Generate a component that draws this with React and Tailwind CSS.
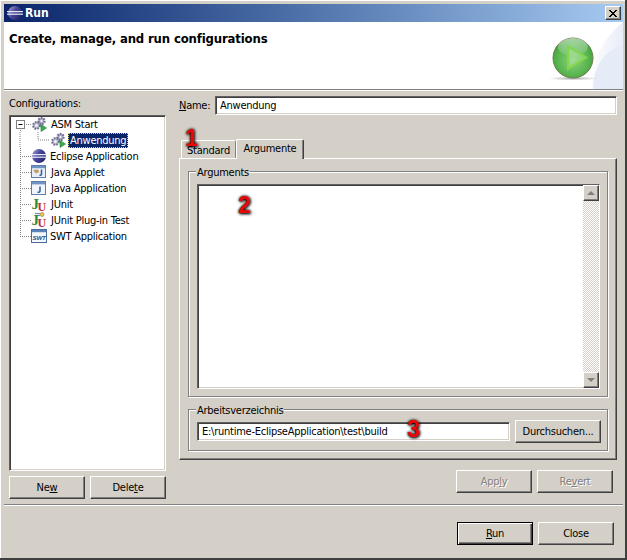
import React from "react";

const bevelUp = "border border-t-white border-l-white border-r-[#404040] border-b-[#404040] shadow-[inset_-1px_-1px_0_#808080]";
const sunken = "border border-t-[#606060] border-l-[#606060] border-r-white border-b-white shadow-[inset_1px_1px_0_#404040,inset_-1px_-1px_0_#d4d0c8]";

function Gears() {
  return (
    <svg width="16" height="16" viewBox="0 0 16 16" className="shrink-0">
      <circle cx="10.5" cy="5" r="3.2" fill="#a9a9c2" stroke="#6d6d8e" strokeWidth="2" strokeDasharray="1.6 1.2" />
      <circle cx="10.5" cy="5" r="1.1" fill="#fff" />
      <circle cx="5.5" cy="9.5" r="3.4" fill="#b9b9cc" stroke="#6d6d8e" strokeWidth="2" strokeDasharray="1.6 1.2" />
      <circle cx="5.5" cy="9.5" r="1.2" fill="#fff" />
      <path d="M10 8.5 L15.5 12 L10 15.5 Z" fill="#35b04a" stroke="#1e7d33" strokeWidth="0.6" />
    </svg>
  );
}

function EclipseIcon({ id = "ec" }) {
  return (
    <svg width="16" height="16" viewBox="0 0 16 16" className="shrink-0">
      <defs>
        <linearGradient id={id} x1="0" x2="1" y1="0" y2="0.6">
          <stop offset="0" stopColor="#b8a8dc" />
          <stop offset="0.5" stopColor="#4a4a9c" />
          <stop offset="1" stopColor="#25256e" />
        </linearGradient>
      </defs>
      <circle cx="8" cy="8" r="7" fill={`url(#${id})`} />
      <rect x="0" y="6" width="16" height="1.2" fill="#e8e8f6" />
      <rect x="0" y="8.6" width="16" height="1.2" fill="#e8e8f6" />
    </svg>
  );
}

function AppletIcon() {
  return (
    <svg width="16" height="16" viewBox="0 0 16 16" className="shrink-0">
      <rect x="0.5" y="1.5" width="14" height="12" fill="#e8eef8" stroke="#5f7fa8" />
      <rect x="1" y="2" width="13" height="2.2" fill="#6f94c4" />
      <path d="M2 6 L7 5.5 L8 8 L5 9.5 Z" fill="#c89a5a" />
      <path d="M10.5 5.5 V10 Q10.5 11.6 8.5 11.2" fill="none" stroke="#2f5da0" strokeWidth="1.5" />
    </svg>
  );
}

function JavaAppIcon() {
  return (
    <svg width="16" height="16" viewBox="0 0 16 16" className="shrink-0">
      <rect x="0.5" y="1.5" width="14" height="13" fill="#f2f6fc" stroke="#5f7fa8" />
      <rect x="1" y="2" width="13" height="2.4" fill="#6f94c4" />
      <path d="M9 6.5 V11 Q9 12.6 6.5 12.2" fill="none" stroke="#2f5da0" strokeWidth="1.5" />
    </svg>
  );
}

function JUnitIcon({ plug }) {
  return (
    <svg width="16" height="16" viewBox="0 0 16 16" className="shrink-0 overflow-visible">
      {plug && (
        <g>
          <path d="M4 1.5 H9" stroke="#7a8fc0" strokeWidth="1.2" />
          <path d="M4 3.5 H9" stroke="#7a8fc0" strokeWidth="1.2" />
          <circle cx="11" cy="2.5" r="2" fill="#e8c45a" stroke="#8a7a30" strokeWidth="0.6" />
        </g>
      )}
      <text x="0.5" y="13" fontFamily="'Liberation Serif', serif" fontWeight="700" fontSize="15" fill="#2e8b3a">J</text>
      <text x="6.5" y="14.5" fontFamily="'Liberation Serif', serif" fontWeight="700" fontSize="12" fill="#c03030">U</text>
    </svg>
  );
}

function SwtIcon() {
  return (
    <svg width="16" height="16" viewBox="0 0 16 16" className="shrink-0">
      <rect x="0.5" y="1.5" width="15" height="13" fill="#f4f7fc" stroke="#4d6c9c" />
      <rect x="1" y="2" width="14" height="2.2" fill="#5c84bc" />
      <text x="8" y="12" textAnchor="middle" fontFamily="'Liberation Sans', sans-serif" fontWeight="700" fontStyle="italic" fontSize="6.2" fill="#2f4f80">SWT</text>
    </svg>
  );
}

function Connector({ first, last, nested }) {
  if (nested) {
    return (
      <svg width="39" height="16" className="shrink-0">
        <path d="M9 0 V16" stroke="#808080" strokeDasharray="1 1" />
        <path d="M27 0 V8 H39" fill="none" stroke="#808080" strokeDasharray="1 1" />
      </svg>
    );
  }
  return (
    <svg width="20" height="16" className="shrink-0">
      <path d={first ? "M9.5 12 V16" : last ? "M9.5 0 V8" : "M9.5 0 V16"} stroke="#808080" strokeDasharray="1 1" />
      <path d="M13 8.5 H20" stroke="#808080" strokeDasharray="1 1" />
      {!first && <path d="M9 8.5 H13" stroke="#808080" strokeDasharray="1 1" />}
      {first && (
        <g>
          <rect x="5.5" y="4.5" width="8" height="8" fill="#fff" stroke="#808080" />
          <path d="M7.5 8.5 H11.5" stroke="#000" />
        </g>
      )}
    </svg>
  );
}

function TreeRow({ icon, label, first, last, nested, selected, gap = "ml-[3px]" }) {
  return (
    <div className="flex h-4 items-center">
      <Connector first={first} last={last} nested={nested} />
      {icon}
      {selected ? (
        <span className="ml-[2px] px-px h-[15px] leading-[13px] border border-dotted border-[#e8d060] bg-[#0a246a] text-white">{label}</span>
      ) : (
        <span className={gap}>{label}</span>
      )}
    </div>
  );
}

function Btn({ children, disabled, def, className = "" }) {
  return (
    <div
      className={`h-[23px] flex items-center justify-center ${className} ${
        def
          ? "border border-black shadow-[inset_1px_1px_0_#fff,inset_-1px_-1px_0_#404040,inset_-2px_-2px_0_#808080]"
          : bevelUp
      } ${disabled ? "text-[#808080] [text-shadow:1px_1px_0_#fff]" : "text-black"}`}
    >
      {children}
    </div>
  );
}

function Group({ title, className = "", children }) {
  return (
    <div className={`relative border border-[#808080] shadow-[inset_1px_1px_0_#fff,1px_1px_0_#fff] ${className}`}>
      <span className="absolute left-[7px] -top-[6px] h-[13px] leading-[13px] bg-[#d4d0c8] px-px">{title}</span>
      {children}
    </div>
  );
}

function Mark({ children, className }) {
  return (
    <span className={`absolute z-20 font-bold text-[23px] leading-none tracking-normal text-[#e80808] font-['Liberation_Sans',sans-serif] [text-shadow:0_0_3px_#000,1px_1px_3px_#000] ${className}`}>
      {children}
    </span>
  );
}

export default function App() {
  return (
    <div className="relative w-[627px] h-[560px] flex flex-col overflow-hidden bg-[#d4d0c8] text-[11px] leading-[13px] tracking-[-0.25px] text-black border-r-2 border-b-2 border-r-[#404040] border-b-[#404040] font-['DejaVu_Sans_Condensed','DejaVu_Sans',sans-serif] pl-1 pt-1 pr-[2px] shadow-[inset_1px_1px_0_#fff]">
      {/* Title bar */}
      <div className="h-[18px] shrink-0 flex items-center bg-gradient-to-r from-[#0a246a] to-[#a6caf0] pl-[3px] pr-[2px]">
        <EclipseIcon id="ec-title" />
        <span className="ml-[2px] font-bold text-white text-[12px] tracking-normal">Run</span>
        <div className={`ml-auto w-4 h-[14px] bg-[#d4d0c8] flex items-center justify-center ${bevelUp}`}>
          <svg width="8" height="7" viewBox="0 0 8 7">
            <path d="M0 0 L7 7 M1 0 L8 7 M7 0 L0 7 M8 0 L1 7" stroke="#000" strokeWidth="1" />
          </svg>
        </div>
      </div>

      {/* Header */}
      <div className="relative h-[68px] shrink-0 bg-white border-b border-b-[#808080] pl-[5px] pt-[9px] overflow-hidden">
        <span className="font-bold text-[13px] leading-4 tracking-[-0.15px]">Create, manage, and run configurations</span>
        <svg width="120" height="67" viewBox="0 0 120 67" className="absolute right-0 top-0">
          <defs>
            <radialGradient id="ball" cx="0.5" cy="0.55" r="0.6">
              <stop offset="0" stopColor="#8ed27e" />
              <stop offset="0.65" stopColor="#58b54e" />
              <stop offset="1" stopColor="#3a963a" />
            </radialGradient>
            <linearGradient id="shine" x1="0" x2="0" y1="0" y2="1">
              <stop offset="0" stopColor="#ffffff" stopOpacity="0.9" />
              <stop offset="1" stopColor="#ffffff" stopOpacity="0.1" />
            </linearGradient>
            <radialGradient id="shade">
              <stop offset="0" stopColor="#707070" stopOpacity="0.6" />
              <stop offset="1" stopColor="#808080" stopOpacity="0" />
            </radialGradient>
            <linearGradient id="sky" x1="0" x2="1" y1="0" y2="0">
              <stop offset="0" stopColor="#ffffff" />
              <stop offset="1" stopColor="#e8edf9" />
            </linearGradient>
          </defs>
          <path d="M86 67 Q90 24 120 0 V67 Z" fill="url(#sky)" />
          <path d="M90 67 Q90 34 120 22 V67 Z" fill="#e6ebf8" />
          <ellipse cx="70" cy="56.5" rx="25" ry="2" fill="url(#shade)" />
          <circle cx="70" cy="36" r="20" fill="url(#ball)" stroke="#6f7f50" strokeWidth="1" />
          <ellipse cx="70" cy="25" rx="15" ry="9" fill="url(#shine)" opacity="0.6" />
          <path d="M65 24.5 L83 35.5 L65 47 Z" fill="#bfe8ae" fillOpacity="0.4" stroke="#84d64e" strokeWidth="2.2" strokeLinejoin="miter" />
        </svg>
      </div>

      {/* Body */}
      <div className="flex-1 flex flex-col border-t border-t-white">
        <div className="flex flex-1">
          {/* Left column */}
          <div className="w-[162px] shrink-0 pl-[5px] pt-[6px] flex flex-col">
            <div className="h-[13px]">
              Confi<span className="underline">g</span>urations:
            </div>
            <div className={`mt-[5px] h-[356px] bg-white ${sunken} px-px`}>
              <TreeRow first icon={<Gears />} label="ASM Start" gap="ml-[4px]" />
              <TreeRow nested selected icon={<Gears />} label="Anwendung" />
              <TreeRow icon={<EclipseIcon id="ec-tree" />} label="Eclipse Application" gap="ml-[3px]" />
              <TreeRow icon={<AppletIcon />} label="Java Applet" gap="ml-[4px]" />
              <TreeRow icon={<JavaAppIcon />} label="Java Application" gap="ml-[4px]" />
              <TreeRow icon={<JUnitIcon />} label="JUnit" gap="ml-[4px]" />
              <TreeRow icon={<JUnitIcon plug />} label="JUnit Plug-in Test" gap="ml-[4px]" />
              <TreeRow last icon={<SwtIcon />} label="SWT Application" gap="ml-[3px]" />
            </div>
            <div className="mt-[5px] flex gap-[5px]">
              <Btn className="w-[76px]"><span>Ne<span className="underline">w</span></span></Btn>
              <Btn className="w-[76px]"><span>Dele<span className="underline">t</span>e</span></Btn>
            </div>
          </div>

          {/* Right column */}
          <div className="flex-1 pl-[13px] pr-[6px] pt-[5px] flex flex-col relative">
            <div className="flex items-center h-[19px]">
              <span className="w-9 shrink-0"><span className="underline">N</span>ame:</span>
              <div className={`w-[402px] h-[19px] bg-white ${sunken} pl-[4px] flex items-center`}>Anwendung</div>
            </div>

            {/* Tabs */}
            <div className="mt-[23px] flex items-end pl-[2px] h-[20px] relative z-10">
              <div className="w-[55px] h-[18px] border border-b-0 border-t-white border-l-white border-r-[#808080] rounded-t-[2px] flex items-center justify-center pt-[1px]">Standard</div>
              <div className="w-[68px] h-[20px] -mb-px bg-[#d4d0c8] border border-b-0 border-t-white border-l-white border-r-[#404040] rounded-t-[2px] shadow-[inset_-1px_0_0_#808080] flex items-center justify-center pb-[2px]">Argumente</div>
            </div>
            <div className="w-[438px] h-[302px] border border-t-white border-l-white border-r-[#404040] border-b-[#404040] shadow-[inset_-1px_-1px_0_#808080] pl-[8px] pt-[12px]">
              <Group title="Arguments" className="w-[420px] h-[226px] pl-[8px] pt-[12px]">
                <div className={`relative w-[403px] h-[205px] bg-white ${sunken} flex justify-end`}>
                  <div className="w-4 h-full flex flex-col bg-[repeating-conic-gradient(#d4d0c8_0_25%,#ffffff_0_50%)] bg-[length:2px_2px]">
                    <div className={`h-4 w-4 bg-[#d4d0c8] flex items-center justify-center ${bevelUp}`}>
                      <svg width="8" height="4" viewBox="0 0 8 4"><path d="M4 0 L8 4 H0 Z" fill="#808080" /></svg>
                    </div>
                    <div className={`mt-auto h-4 w-4 bg-[#d4d0c8] flex items-center justify-center ${bevelUp}`}>
                      <svg width="8" height="4" viewBox="0 0 8 4"><path d="M0 0 H8 L4 4 Z" fill="#808080" /></svg>
                    </div>
                  </div>
                </div>
              </Group>
              <Group title="Arbeitsverzeichnis" className="mt-[12px] w-[420px] h-[42px] pl-[8px] pt-[3px] flex items-center">
                <div className={`w-[313px] h-[19px] bg-white ${sunken} pl-[4px] flex items-center`}>E:\runtime-EclipseApplication\test\build</div>
                <Btn className="ml-[5px] w-[86px]">Durchsuchen...</Btn>
              </Group>
            </div>

            <div className="mt-[10px] flex justify-end gap-[5px] pr-[4px]">
              <Btn disabled className="w-[76px]"><span>App<span className="underline">l</span>y</span></Btn>
              <Btn disabled className="w-[76px]"><span>Re<span className="underline">v</span>ert</span></Btn>
            </div>

            <Mark className="left-[19px] top-[36px]">1</Mark>
            <Mark className="left-[72px] top-[103px]">2</Mark>
            <Mark className="left-[241px] top-[327px]">3</Mark>
          </div>
        </div>

        {/* Footer */}
        <div className="h-[54px] shrink-0 border-t border-t-[#808080] shadow-[inset_0_1px_0_#fff] flex items-center justify-end gap-[5px] pr-[9px] pt-[4px]">
          <Btn def className="w-[76px]"><span><span className="underline">R</span>un</span></Btn>
          <Btn className="w-[76px]">Close</Btn>
        </div>
      </div>
    </div>
  );
}
